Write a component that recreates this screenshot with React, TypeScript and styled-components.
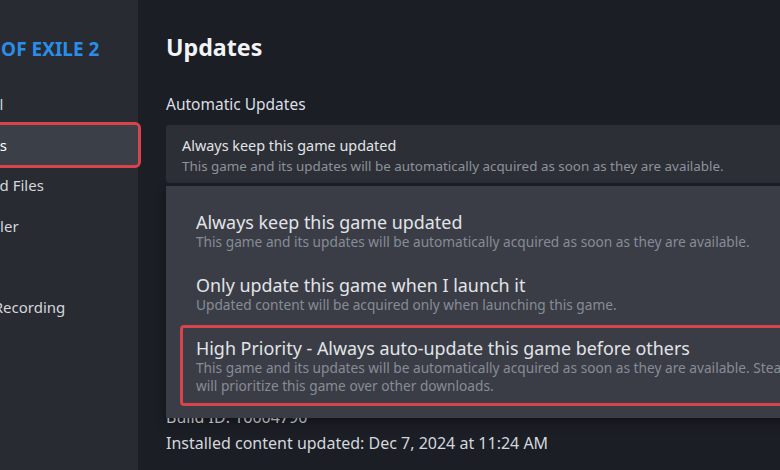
import React from 'react';
import styled, { createGlobalStyle } from 'styled-components';

const GlobalStyle = createGlobalStyle`
  html, body {
    margin: 0;
    padding: 0;
    background: #1b1e25;
    overflow: hidden;
  }
  body {
    font-family: 'Noto Sans', 'Open Sans', Arial, sans-serif;
    color: #dcdee2;
  }
`;

type MenuOption = {
  title: string;
  lines: string[];
  highlighted?: boolean;
};

const sideItems = [
  'General',
  'Updates',
  'Installed Files',
  'Controller',
  'DLC',
  'Game Recording',
];

const options: MenuOption[] = [
  {
    title: 'Always keep this game updated',
    lines: [
      'This game and its updates will be automatically acquired as soon as they are available.',
    ],
  },
  {
    title: 'Only update this game when I launch it',
    lines: ['Updated content will be acquired only when launching this game.'],
  },
  {
    title: 'High Priority - Always auto-update this game before others',
    lines: [
      'This game and its updates will be automatically acquired as soon as they are available. Steam',
      'will prioritize this game over other downloads.',
    ],
    highlighted: true,
  },
];

const App: React.FC = () => {
  return (
    <>
      <GlobalStyle />
      <StyledPage>
        <Sidebar>
          <SidebarInner>
            <GameTitle>PATH OF EXILE 2</GameTitle>
            <SideList>
              {sideItems.map((item) => (
                <SideItem key={item} $active={item === 'Updates'}>
                  {item}
                </SideItem>
              ))}
            </SideList>
          </SidebarInner>
        </Sidebar>

        <Main>
          <Heading>Updates</Heading>
          <SectionLabel>Automatic Updates</SectionLabel>

          <DropdownWrap>
            <DropdownBox>
              <DropTitle>Always keep this game updated</DropTitle>
              <DropSub>
                This game and its updates will be automatically acquired as
                soon as they are available.
              </DropSub>
            </DropdownBox>

            <Menu>
              {options.map((opt) => (
                <MenuItem key={opt.title} $highlighted={opt.highlighted}>
                  <MenuTitle>{opt.title}</MenuTitle>
                  {opt.lines.map((line) => (
                    <MenuSub key={line}>{line}</MenuSub>
                  ))}
                </MenuItem>
              ))}
            </Menu>
          </DropdownWrap>

          <InfoLine $spaced>Build ID: 16004790</InfoLine>
          <InfoLine>Installed content updated: Dec 7, 2024 at 11:24 AM</InfoLine>
        </Main>
      </StyledPage>
    </>
  );
};

export default App;

const StyledPage = styled.div`
  display: flex;
  width: 780px;
  height: 470px;
  overflow: hidden;
`;

const Sidebar = styled.aside`
  width: 138px;
  flex-shrink: 0;
  background: #282b31;
  position: relative;
  z-index: 2;
`;

/* the screenshot is cropped, so the sidebar text starts left of the frame */
const SidebarInner = styled.div`
  margin-left: -52px;
  padding-top: 37px;
`;

const GameTitle = styled.div`
  font-size: 19px;
  font-weight: 700;
  line-height: 24px;
  color: #2a8ee8;
  white-space: nowrap;
`;

const SideList = styled.div`
  margin-top: 23px;
  display: flex;
  flex-direction: column;
`;

const SideItem = styled.div<{ $active?: boolean }>`
  height: 40.6px;
  line-height: 40.6px;
  font-size: 15px;
  white-space: nowrap;
  color: ${({ $active }) => ($active ? '#ffffff' : '#d4d7dc')};
  background: ${({ $active }) => ($active ? '#3b3f48' : 'transparent')};
  outline: ${({ $active }) => ($active ? '3px solid #d9434b' : 'none')};
  border-radius: 3px;
`;

const Main = styled.main`
  flex: 1;
  padding: 33px 0 0 28px;
  min-width: 0;
`;

const Heading = styled.h1`
  margin: 0;
  font-size: 23.2px;
  font-weight: 700;
  line-height: 28px;
  color: #f2f3f5;
`;

const SectionLabel = styled.div`
  margin-top: 33px;
  font-size: 15.5px;
  line-height: 20px;
  color: #dcdee2;
`;

const DropdownWrap = styled.div`
  position: relative;
  margin-top: 11px;
  width: 640px;
`;

const DropdownBox = styled.div`
  background: #2c2f36;
  padding: 11px 16px 7px;
  border-radius: 3px;
`;

const DropTitle = styled.div`
  font-size: 14.4px;
  line-height: 20px;
  color: #e2e4e7;
  white-space: nowrap;
`;

const DropSub = styled.div`
  font-size: 13.4px;
  line-height: 20px;
  color: #8d929b;
  white-space: nowrap;
`;

const Menu = styled.div`
  position: absolute;
  top: calc(100% + 3px);
  left: 0;
  right: 0;
  background: #3a3d46;
  padding: 13px 0 12px 14px;
  box-shadow: 0 4px 10px rgba(0, 0, 0, 0.35);
  z-index: 3;
`;

const MenuItem = styled.div<{ $highlighted?: boolean }>`
  padding: 9px 16px 8px 13px;
  border: 3px solid
    ${({ $highlighted }) => ($highlighted ? '#d9434b' : 'transparent')};
  border-radius: 4px;
`;

const MenuTitle = styled.div`
  font-size: 17.9px;
  line-height: 22px;
  color: #e2e4e7;
  white-space: nowrap;
`;

const MenuSub = styled.div`
  font-size: 13.7px;
  line-height: 18px;
  color: #878c95;
  white-space: nowrap;
`;

const InfoLine = styled.div<{ $spaced?: boolean }>`
  margin-top: ${({ $spaced }) => ($spaced ? '221px' : '0')};
  font-size: 16px;
  line-height: 26px;
  color: #d4d7dc;
  white-space: nowrap;
`;
